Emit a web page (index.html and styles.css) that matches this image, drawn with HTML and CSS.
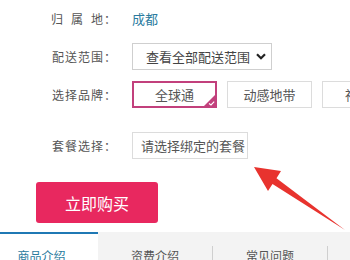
FILE: index.html
```html
<!DOCTYPE html>
<html>
	<head>
		<meta charset="utf-8">
		<link rel="stylesheet" href="styles.css">
	</head>
	<body>
		<div class="form">
			<div class="row">
				<span class="label">归&ensp;属&ensp;地：</span>
				<span class="value">成都</span>
			</div>
			<div class="row">
				<span class="label">配送范围：</span>
				<div class="select">
					<span>查看全部配送范围</span>
					<svg class="chevron" width="10" height="7" viewBox="0 0 10 7"><path d="M1 1.2 L5 5.2 L9 1.2" fill="none" stroke="#222" stroke-width="2.2"/></svg>
				</div>
			</div>
			<div class="row row_brand">
				<span class="label">选择品牌：</span>
				<div class="brands">
					<span class="brand brand_on">全球通
						<svg class="corner" width="13" height="13" viewBox="0 0 13 13"><path d="M13 0 L13 13 L0 13 Z" fill="#c2407c"/><path d="M6 9.5 L8 11 L11.2 7.6" fill="none" stroke="#fff" stroke-width="1.1"/></svg>
					</span>
					<span class="brand">动感地带</span>
					<span class="brand">神州行</span>
				</div>
			</div>
			<div class="row">
				<span class="label">套餐选择：</span>
				<div class="plan">请选择绑定的套餐</div>
			</div>
			<button class="buy">立即购买</button>
		</div>
		<div class="tabs">
			<div class="tab tab_on"><div class="tab_label">商品介绍</div></div>
			<div class="tab"><div class="tab_label">资费介绍</div></div>
			<div class="tab"><div class="tab_label">常见问题</div></div>
			<div class="tab"><div class="tab_label"></div></div>
		</div>
		<svg class="arrow" width="350" height="260" viewBox="0 0 350 260">
			<path d="M254 167 L281 171 L276.5 178.3 L345 230 L272.5 184.1 L268 191 Z" fill="#e8332e"/>
		</svg>
	</body>
</html>
```
FILE: styles.css
```css
html	{
	overflow: hidden;
}
body	{
	margin: 0;
	width: 350px;
	height: 260px;
	overflow: hidden;
	position: relative;
	background: #fff;
	font-family: "Noto Sans CJK SC", "Liberation Sans", sans-serif;
	color: #555;
}
.form	{
	padding: 5px 0 0 36px;
}
.row	{
	display: flex;
	align-items: center;
	height: 27px;
	margin-bottom: 11px;
	white-space: nowrap;
}
.row_brand	{
	margin-bottom: 24px;
}
.label	{
	width: 81px;
	flex-shrink: 0;
	margin-right: 15px;
	text-align: right;
	font-size: 12px;
	letter-spacing: 1px;
	color: #555;
}
.value	{
	font-size: 13px;
	color: #2a7b9e;
}
.select	{
	display: flex;
	align-items: center;
	box-sizing: border-box;
	width: 140px;
	height: 27px;
	padding-left: 13px;
	border: 1px solid #cfcfcf;
	font-size: 13px;
	color: #444;
}
.chevron	{
	margin-left: 6px;
}
.brands	{
	display: flex;
	gap: 10px;
	flex-shrink: 0;
}
.brand	{
	position: relative;
	display: flex;
	align-items: center;
	justify-content: center;
	box-sizing: border-box;
	width: 85px;
	height: 27px;
	border: 1px solid #dcdcdc;
	font-size: 13px;
	color: #555;
}
.brand_on	{
	border: 2px solid #c2407c;
}
.corner	{
	position: absolute;
	right: -1px;
	bottom: -1px;
}
.plan	{
	display: flex;
	align-items: center;
	box-sizing: border-box;
	width: 116px;
	height: 27px;
	padding-left: 8px;
	border: 1px solid #dcdcdc;
	font-size: 13px;
	color: #555;
}
.buy	{
	display: block;
	width: 122px;
	height: 41px;
	margin-top: 23px;
	border: none;
	border-radius: 3px;
	background: #e8285f;
	color: #fff;
	font-family: "Noto Sans CJK SC", "Liberation Sans", sans-serif;
	font-size: 16px;
}
.tabs	{
	display: flex;
	margin: 9px 0 0 -15px;
	height: 30px;
	background: #f3f3f3;
}
.tab	{
	box-sizing: border-box;
	width: 115px;
	flex-shrink: 0;
	padding-top: 14px;
}
.tab_on	{
	width: 113px;
	padding-top: 12px;
	border-top: 2px solid #1f78b4;
	background: #fff;
}
.tab_label	{
	height: 20px;
	line-height: 20px;
	text-align: center;
	font-size: 12px;
	color: #555;
	border-right: 1px solid #cfcfcf;
}
.tab_on .tab_label	{
	color: #2a7b9e;
	border-right: none;
}
.arrow	{
	position: absolute;
	left: 0;
	top: 0;
}
```
